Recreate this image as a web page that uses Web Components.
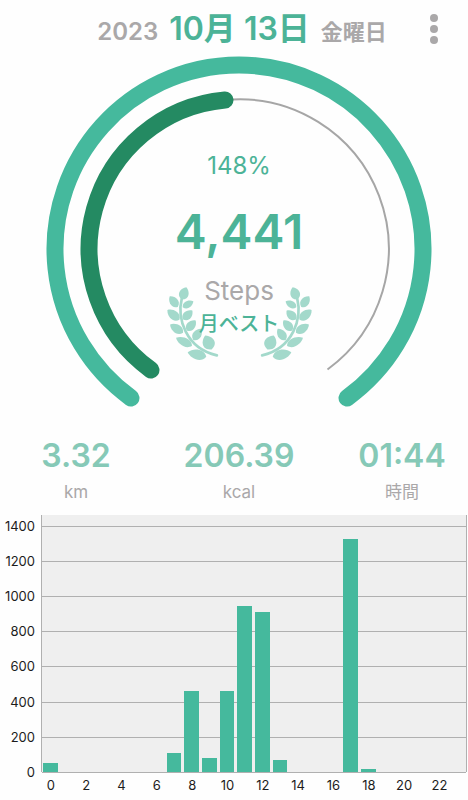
<!DOCTYPE html>
<html lang="ja">
<head>
<meta charset="utf-8">
<meta name="viewport" content="width=device-width, initial-scale=1">
<title>Steps</title>
<style>
    :root {
        --accent: #45b99d;
        --accent-dark: #248a62;
        --accent-text: #4cb397;
        --accent-soft: #86c9b7;
        --leaf: #a3d9cb;
        --muted: #aaa8a9;
    }
    body {
        margin: 0;
        background: #fefefe;
        font-family: Inter, "Noto Sans CJK JP", sans-serif;
    }
</style>
</head>
<body>
<step-day>
    <day-header slot="header" year="2023" day="10月 13日" weekday="金曜日"></day-header>
    <step-gauge slot="gauge" percent="148%" steps="4,441" unit="Steps">月ベスト</step-gauge>
    <day-stat slot="stats" value="3.32">km</day-stat>
    <day-stat slot="stats" value="206.39">kcal</day-stat>
    <day-stat slot="stats" value="01:44">時間</day-stat>
    <hour-chart slot="chart" max="1460" step="200" values="53,0,0,0,0,0,0,108,459,82,463,942,909,67,0,0,0,1324,18,0,0,0,0,0"></hour-chart>
</step-day>

<script>
class StepDay extends HTMLElement {
    constructor() {
        super();
        this.attachShadow({ mode: 'open' });
        this.shadowRoot.innerHTML = `
            <style>
                :host { display: block; }
                .top { padding-left: 10px; }
                .stats {
                    display: grid;
                    grid-template-columns: repeat(3, 1fr);
                    column-gap: 47px;
                    padding: 28px 8px 0 18px;
                }
                .chart { padding: 11px 1px 0 0; }
            </style>
            <main>
                <div class="top">
                    <slot name="header"></slot>
                    <slot name="gauge"></slot>
                </div>
                <div class="stats"><slot name="stats"></slot></div>
                <div class="chart"><slot name="chart"></slot></div>
            </main>
        `;
    }
}

class DayHeader extends HTMLElement {
    constructor() {
        super();
        this.attachShadow({ mode: 'open' });
    }

    connectedCallback() {
        this.shadowRoot.innerHTML = `
            <style>
                :host {
                    display: grid;
                    align-items: center;
                    height: 56px;
                }
                h1, button { grid-area: 1 / 1; }
                h1 {
                    display: flex;
                    justify-content: center;
                    align-items: baseline;
                    gap: 11px;
                    margin: 0;
                    padding: 4px 0 0 6px;
                    font-size: 24px;
                    font-weight: 600;
                    line-height: 40px;
                    color: var(--muted);
                    white-space: nowrap;
                }
                .day { font-size: 32px; color: var(--accent-text); }
                .weekday { font-size: 22px; }
                button {
                    justify-self: end;
                    display: flex;
                    justify-content: center;
                    width: 36px;
                    margin-right: 16px;
                    padding: 2px 0 0;
                    border: 0;
                    background: none;
                    color: var(--muted);
                    cursor: pointer;
                }
            </style>
            <h1>
                <span>${this.getAttribute('year')}</span>
                <span class="day">${this.getAttribute('day')}</span>
                <span class="weekday">${this.getAttribute('weekday')}</span>
            </h1>
            <button type="button" aria-label="メニュー">
                <svg width="8" height="32" viewBox="0 0 8 32" fill="currentColor">
                    <circle cx="4" cy="5" r="4"/>
                    <circle cx="4" cy="16" r="4"/>
                    <circle cx="4" cy="27" r="4"/>
                </svg>
            </button>
        `;
    }
}

// tip x, tip y, base x, base y, half width
const LEAVES = [
    [58, 1, 44, 38, 19],
    [8, 28, 32, 60, 17],
    [1, 69, 37, 99, 18],
    [9, 113, 48, 138, 17],
    [27, 153, 75, 177, 17],
    [62, 197, 118, 210, 20],
    [79, 43, 47, 61, 14],
    [76, 71, 48, 98, 17],
    [86, 101, 59, 131, 17],
    [103, 126, 79, 160, 17],
    [115, 146, 134, 188, 24]
];

class LaurelBranch extends HTMLElement {
    constructor() {
        super();
        this.attachShadow({ mode: 'open' });
        this.shadowRoot.innerHTML = `
            <style>
                :host { display: block; color: var(--leaf); }
                :host([flip]) { transform: scaleX(-1); }
                svg { display: block; }
            </style>
            <svg width="52" height="73" viewBox="0 0 156 220" fill="currentColor" aria-hidden="true">
                ${LEAVES.map(leaf => `<path d="${this.leafPath(...leaf)}"/>`).join('')}
                <path d="M44 36C30 92 54 184 150 206" fill="none" stroke="currentColor" stroke-width="8" stroke-linecap="round"/>
            </svg>
        `;
    }

    leafPath(tx, ty, bx, by, w) {
        const dx = bx - tx;
        const dy = by - ty;
        const len = Math.hypot(dx, dy);
        const at = (t, side) => {
            const x = tx + dx * t - dy / len * side * w;
            const y = ty + dy * t + dx / len * side * w;
            return `${x.toFixed(1)} ${y.toFixed(1)}`;
        };
        return `M${tx} ${ty}C${at(0.2, 0.8)} ${at(0.8, 1.2)} ${bx} ${by}C${at(0.8, -1.2)} ${at(0.2, -0.8)} ${tx} ${ty}Z`;
    }
}

class StepGauge extends HTMLElement {
    constructor() {
        super();
        this.attachShadow({ mode: 'open' });
    }

    connectedCallback() {
        this.shadowRoot.innerHTML = `
            <style>
                :host {
                    display: grid;
                    justify-items: center;
                    text-align: center;
                }
                .dial, .readout { grid-area: 1 / 1; }
                .dial { display: block; }
                .readout { padding-top: 94px; }
                p { margin: 0; }
                .percent {
                    font-size: 24px;
                    line-height: 32px;
                    color: var(--accent-text);
                }
                .steps {
                    margin-top: 20px;
                    font-size: 48px;
                    font-weight: 600;
                    line-height: 60px;
                    color: var(--accent-text);
                }
                .badge {
                    display: grid;
                    justify-items: center;
                    margin-top: 12px;
                }
                .wreath, .label { grid-area: 1 / 1; }
                .wreath {
                    display: flex;
                    gap: 41px;
                    padding-top: 13px;
                }
                .unit {
                    font-size: 26px;
                    line-height: 34px;
                    color: var(--muted);
                }
                .best {
                    margin-top: 4px;
                    font-size: 20px;
                    font-weight: 500;
                    line-height: 24px;
                    color: var(--accent-text);
                }
            </style>
            <svg class="dial" width="386" height="352" viewBox="0 0 386 352" fill="none" stroke-linecap="round" aria-hidden="true">
                <path d="M85 342A184 184 0 1 1 301 342" stroke="var(--accent)" stroke-width="17"/>
                <path d="M179 44A149.500 149.500 0 0 1 281.500 313.500" stroke="#a6a6a6" stroke-width="2" stroke-linecap="butt"/>
                <path d="M105 314A149.500 149.500 0 0 1 179 44" stroke="var(--accent-dark)" stroke-width="17"/>
            </svg>
            <div class="readout">
                <p class="percent">${this.getAttribute('percent')}</p>
                <p class="steps">${this.getAttribute('steps')}</p>
                <div class="badge">
                    <div class="wreath">
                        <laurel-branch></laurel-branch>
                        <laurel-branch flip></laurel-branch>
                    </div>
                    <div class="label">
                        <p class="unit">${this.getAttribute('unit')}</p>
                        <p class="best"><slot></slot></p>
                    </div>
                </div>
            </div>
        `;
    }
}

class DayStat extends HTMLElement {
    constructor() {
        super();
        this.attachShadow({ mode: 'open' });
    }

    connectedCallback() {
        this.shadowRoot.innerHTML = `
            <style>
                :host {
                    display: flex;
                    flex-direction: column;
                    align-items: center;
                    white-space: nowrap;
                }
                .value {
                    font-size: 32px;
                    font-weight: 600;
                    line-height: 40px;
                    color: var(--accent-soft);
                }
                .unit {
                    margin-top: 4px;
                    font-size: 17px;
                    line-height: 24px;
                    color: var(--muted);
                }
            </style>
            <span class="value">${this.getAttribute('value')}</span>
            <span class="unit"><slot></slot></span>
        `;
    }
}

class HourChart extends HTMLElement {
    constructor() {
        super();
        this.attachShadow({ mode: 'open' });
    }

    connectedCallback() {
        const max = Number(this.getAttribute('max'));
        const step = Number(this.getAttribute('step'));
        const values = this.getAttribute('values').split(',').map(Number);
        const count = Math.floor(max / step);
        const ticks = Array.from({ length: count + 1 }, (_, i) => (count - i) * step);

        this.shadowRoot.innerHTML = `
            <style>
                :host {
                    display: grid;
                    grid-template-columns: 41px 1fr;
                    grid-template-rows: 257px auto;
                    font-size: 13px;
                    line-height: 16px;
                    color: #1c1c1c;
                }
                .scale, .lines {
                    display: grid;
                    grid-template-rows: minmax(0, ${max - count * step}fr) repeat(${count}, minmax(0, ${step}fr)) 0;
                }
                /* headroom above the top tick */
                .scale::before, .lines::before { content: ''; }
                .scale span {
                    display: flex;
                    align-items: center;
                    justify-content: flex-end;
                    height: 0;
                    padding-right: 6px;
                }
                .plot {
                    display: grid;
                    background: #efefef;
                    border: solid #b0b0b0;
                    border-width: 0 1px;
                }
                .lines, .bars { grid-area: 1 / 1; }
                .lines i { border-top: 1px solid #b0b0b0; }
                .bars, .hours {
                    display: grid;
                    grid-template-columns: repeat(${values.length}, minmax(0, 1fr));
                }
                .bars { align-items: end; }
                .bars i {
                    height: calc(var(--value) / ${max} * 100%);
                    margin: 0 2px 0 1px;
                    background: var(--accent);
                }
                .hours {
                    grid-column: 2;
                    padding: 5px 1px 0;
                }
                .hours span {
                    display: flex;
                    justify-content: center;
                }
            </style>
            <div class="scale">${ticks.map(t => `<span>${t}</span>`).join('')}</div>
            <div class="plot">
                <div class="lines">${ticks.map(() => '<i></i>').join('')}</div>
                <div class="bars">${values.map(v => `<i style="--value: ${v}"></i>`).join('')}</div>
            </div>
            <div class="hours">${values.map((v, i) => `<span>${i % 2 ? '' : i}</span>`).join('')}</div>
        `;
    }
}

customElements.define('laurel-branch', LaurelBranch);
customElements.define('step-day', StepDay);
customElements.define('day-header', DayHeader);
customElements.define('step-gauge', StepGauge);
customElements.define('day-stat', DayStat);
customElements.define('hour-chart', HourChart);
</script>
</body>
</html>
